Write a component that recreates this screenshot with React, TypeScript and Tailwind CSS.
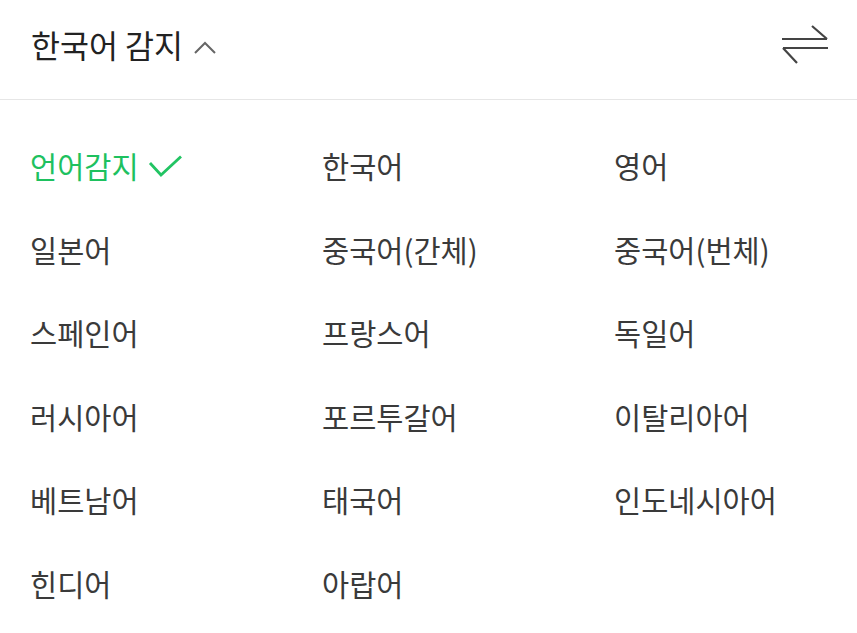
import React from 'react';

const languages = [
  '언어감지', '한국어', '영어',
  '일본어', '중국어(간체)', '중국어(번체)',
  '스페인어', '프랑스어', '독일어',
  '러시아어', '포르투갈어', '이탈리아어',
  '베트남어', '태국어', '인도네시아어',
  '힌디어', '아랍어',
];

const App: React.FC = () => {
  return (
    <div
      className="w-[857px] h-[633px] bg-white overflow-hidden"
      style={{ fontFamily: '"Noto Sans CJK KR", "Noto Sans", sans-serif' }}
    >
      <div className="h-[100px] flex items-center justify-between pl-[31px] pr-[28px] border-b border-[#e6e6e6]">
        <div className="flex items-center gap-[10px] pb-[10px]">
          <span className="text-[31.5px] text-[#222] leading-none">한국어 감지</span>
          <svg width="24" height="16" viewBox="0 0 24 16" className="mt-[4px]">
            <path d="M2 14 L12 4 L22 14" fill="none" stroke="#666" strokeWidth="2" />
          </svg>
        </div>
        <svg width="48" height="42" viewBox="0 0 48 42" className="mb-[8px]">
          <path d="M1 14 H46 M31 1 L46 14" fill="none" stroke="#444" strokeWidth="2.2" />
          <path d="M47 23 H2 M2 23 L16 38" fill="none" stroke="#444" strokeWidth="2.2" />
        </svg>
      </div>
      <div className="grid grid-cols-[292px_292px_1fr] pl-[30px] pt-[24px]">
        {languages.map((lang, i) => (
          <div key={i} className="h-[83.5px] flex items-center">
            {i === 0 ? (
              <span className="flex items-center gap-[9px] text-[29.5px] text-[#1ec15f] leading-none">
                {lang}
                <svg width="35" height="22" viewBox="0 0 35 22">
                  <path d="M2 8 L13 20 L33 1.5" fill="none" stroke="#22c463" strokeWidth="2.8" />
                </svg>
              </span>
            ) : (
              <span className="text-[29.5px] text-[#3a3a3a] leading-none">{lang}</span>
            )}
          </div>
        ))}
      </div>
    </div>
  );
};

export default App;
